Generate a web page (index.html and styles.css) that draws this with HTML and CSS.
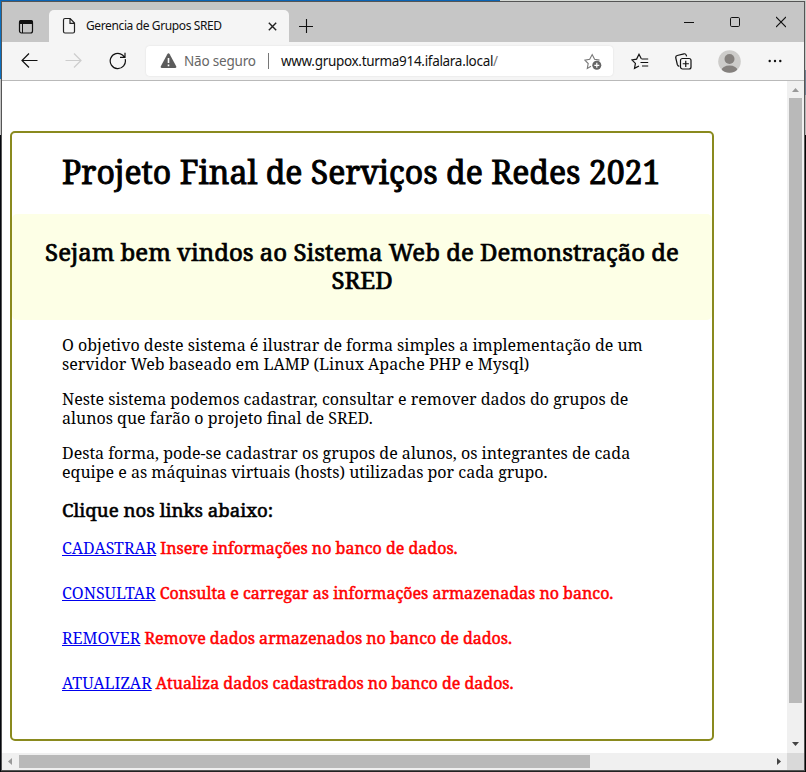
FILE: index.html
```html
<!DOCTYPE html>
<html lang="pt-BR">
<head>
<meta charset="utf-8">
<title>Gerencia de Grupos SRED</title>
<link rel="stylesheet" href="styles.css">
</head>
<body>
<div class="desktop">
<div class="window">
  <header class="tabs">
    <svg class="tab-menu" width="16" height="16" viewBox="0 0 16 16"><rect x="1.5" y="1.5" width="13" height="12.5" rx="2" fill="none" stroke="#111" stroke-width="1.2"/><path d="M1 5V3q0-2 2-2h10q2 0 2 2v2z" fill="#111"/><path d="M4.5 5v9" stroke="#111"/></svg>
    <div class="tab">
      <svg width="14" height="18" viewBox="0 0 14 18" fill="none" stroke="#222" stroke-width="1.2"><path d="M3 1.5h5.2L12.5 6v8.5q0 1.5-1.5 1.5H3q-1.500 0-1.500-1.500V3Q1.500 1.500 3 1.500zM8 1.500V6.300h4.500"/></svg>
      <span class="tab-title">Gerencia de Grupos SRED</span>
      <svg class="tab-close" width="9" height="9" viewBox="0 0 9 9"><path d="M.8.8l7.400 7.400M8.200.8L.8 8.200" stroke="#222" stroke-width="1.400"/></svg>
    </div>
    <svg class="tab-new" width="14" height="14" viewBox="0 0 14 14"><path d="M7.500 0v14M0 7.500h14" stroke="#111" stroke-width="1.100"/></svg>
    <div class="controls">
      <svg width="10" height="12" viewBox="0 0 10 12"><path d="M0 6.500h10" stroke="#111"/></svg>
      <svg width="10" height="12" viewBox="0 0 10 12"><rect x=".5" y="1.500" width="9" height="9" rx="1.200" fill="none" stroke="#111"/></svg>
      <svg width="10" height="12" viewBox="0 0 10 12"><path d="M0 1l10 10M10 1L0 11" stroke="#111" stroke-width="1.100"/></svg>
    </div>
  </header>
  <nav class="toolbar">
    <svg class="back" width="17" height="16" viewBox="0 0 17 16" fill="none" stroke="#111" stroke-width="1.200"><path d="M16.500 7.500H1M8 .5L1 7.500l7 7"/></svg>
    <svg class="forward" width="17" height="16" viewBox="0 0 17 16" fill="none" stroke="#cdcdcd" stroke-width="1.200"><path d="M.5 7.500H16M9 .5l7 7-7 7"/></svg>
    <svg class="reload" width="18" height="18" viewBox="0 0 18 18" fill="none" stroke="#111" stroke-width="1.200"><path d="M16.200 7.200A7.600 7.600 0 1 1 13.500 3L15.500 5M16 .8V5.400H11"/></svg>
    <div class="address">
      <svg width="17" height="16" viewBox="0 0 17 16"><path d="M7.300 1.200q1.200-1.700 2.400 0l6.500 12q.6 1.800-1.200 1.800H2q-1.800 0-1.200-1.800z" fill="#5b5b5b"/><path d="M8.500 5v5M8.500 11.500v1.700" stroke="#fff" stroke-width="1.600"/></svg>
      <span class="security">Não seguro</span>
      <span class="divider"></span>
      <span class="url">www.grupox.turma914.ifalara.local<i>/</i></span>
      <svg class="fav" width="18" height="17" viewBox="0 0 18 17"><path d="M7 13.300L3.300 15.500l.9-5L.8 7.100l4.900-.8L8.200 1.600l2.400 4.700 4.900.8" fill="none" stroke="#777" stroke-width="1.100"/><circle cx="12.800" cy="12.300" r="4.500" fill="#656565"/><path d="M12.800 9.800v5M10.300 12.300h5" stroke="#fff" stroke-width="1.200"/></svg>
    </div>
    <svg class="stars" width="18" height="17" viewBox="0 0 18 17" fill="none" stroke="#111" stroke-width="1.200"><path d="M10.300 5.800L8 1.300 5.600 6.100.9 6.900l3.500 3.500-.9 5L8 13M10.500 6h6.700M9.500 9.500h7.700M11 13h6.200"/></svg>
    <svg class="collections" width="17" height="17" viewBox="0 0 17 17" fill="none" stroke="#111" stroke-width="1.200"><rect x="5.500" y="5.500" width="10.500" height="10.500" rx="2"/><path d="M10.750 7.700v6.200M7.700 10.750h6.200M4.300 13.300Q2.800 13 2.300 11.500L.8 5q-.4-2 1.400-2.500L9 .8q1.800-.3 2.300 1.500l.3 1"/></svg>
    <svg class="avatar" width="23" height="23" viewBox="0 0 23 23"><clipPath id="face"><circle cx="11.500" cy="11.500" r="11.300"/></clipPath><g clip-path="url(#face)"><path d="M0 0h23v23H0z" fill="#cdccca"/><circle cx="11.500" cy="9" r="5" fill="#85817e"/><ellipse cx="11.500" cy="20.500" rx="8" ry="5" fill="#85817e"/></g></svg>
    <svg class="more" width="14" height="4" viewBox="0 0 14 4" fill="#111"><circle cx="1.700" cy="2" r="1.200"/><circle cx="7" cy="2" r="1.200"/><circle cx="12.300" cy="2" r="1.200"/></svg>
  </nav>
  <div class="viewport">
    <main class="page">
      <section class="card">
        <h1>Projeto Final de Serviços de Redes 2021</h1>
        <h2>Sejam bem vindos ao Sistema Web de Demonstração de<br>SRED</h2>
        <div class="text">
          <p>O objetivo deste sistema é ilustrar de forma simples a implementação de um<br>servidor Web baseado em LAMP (Linux Apache PHP e Mysql)</p>
          <p>Neste sistema podemos cadastrar, consultar e remover dados do grupos de<br>alunos que farão o projeto final de SRED.</p>
          <p>Desta forma, pode-se cadastrar os grupos de alunos, os integrantes de cada<br>equipe e as máquinas virtuais (hosts) utilizadas por cada grupo.</p>
          <h3>Clique nos links abaixo:</h3>
          <ul>
            <li><a href="#">CADASTRAR</a> <b>Insere informações no banco de dados.</b></li>
            <li><a href="#">CONSULTAR</a> <b>Consulta e carregar as informações armazenadas no banco.</b></li>
            <li><a href="#">REMOVER</a> <b>Remove dados armazenados no banco de dados.</b></li>
            <li><a href="#">ATUALIZAR</a> <b>Atualiza dados cadastrados no banco de dados.</b></li>
          </ul>
        </div>
      </section>
    </main>
    <div class="vbar">
      <svg width="7" height="4" viewBox="0 0 7 4"><path d="M0 4L3.500 0 7 4z" fill="#999"/></svg>
      <div class="vthumb"></div>
      <svg width="7" height="4" viewBox="0 0 7 4"><path d="M0 0h7L3.500 4z" fill="#444"/></svg>
    </div>
    <div class="hbar">
      <svg width="4" height="7" viewBox="0 0 4 7"><path d="M4 0v7L0 3.500z" fill="#999"/></svg>
      <div class="hthumb"></div>
      <svg width="4" height="7" viewBox="0 0 4 7"><path d="M0 0v7l4-3.500z" fill="#444"/></svg>
    </div>
    <div class="corner"></div>
  </div>
</div>
</div>
</body>
</html>
```
FILE: styles.css
```css
* { box-sizing: border-box; }
body { margin: 0; overflow: hidden; }
svg { display: block; flex: none; }
.desktop {
  width: 806px; height: 772px; padding: 1px;
  background:
    linear-gradient(90deg, #0a64b5 500px, #d5d9d5 500px) 0 0 / 806px 1px no-repeat,
    linear-gradient(#0c70c0 79px, #c4c4c4 79px 135px, #05070d 135px) 0 0 / 1px 772px no-repeat,
    linear-gradient(#c4c8c4 70px, #708090 70px 95px, #b5b5b5 95px 135px, #050505 135px) 805px 0 / 1px 772px no-repeat,
    #222;
}
.window { width: 804px; height: 770px; border: 1px solid #555; background: #fff; display: flex; flex-direction: column; }
.tabs { height: 40px; background: #c6c6c6; display: flex; align-items: center; font: 12px "Noto Sans", "Open Sans", sans-serif; }
.tab-menu { margin: 9px 0 0 16px; }
.tab { align-self: flex-end; margin-left: 15px; width: 240px; height: 32px; padding: 0 12px 0 13px; background: #f5f5f5; border-radius: 5px 5px 0 0; display: flex; align-items: center; color: #111; }
.tab-title { margin: -2px 0 0 10px; letter-spacing: -0.38px; white-space: nowrap; }
.tab-close { margin-left: auto; }
.tab-new { margin: 7px 0 0 10px; }
.controls { margin: -1px 18px 0 auto; display: flex; gap: 36px; }
.toolbar { height: 39px; background: #f5f5f5; border-bottom: 1px solid #b9b9b9; display: flex; align-items: center; }
.back { margin-left: 19px; }
.forward { margin-left: 27px; }
.reload { margin-left: 27px; }
.address { width: 467px; height: 30px; margin-left: 19px; padding: 0 11px 0 14px; border-radius: 4px; background: #fff; box-shadow: 0 0 2px #ddd; display: flex; align-items: center; font: 13.5px "Noto Sans", "Open Sans", sans-serif; white-space: nowrap; }
.security { margin-left: 7px; width: 72px; color: #666; letter-spacing: -0.2px; }
.divider { width: 1px; height: 16px; margin: 0 12px; background: #777; }
.url { color: #111; letter-spacing: -0.31px; }
.url i { font-style: normal; color: #777; }
.fav { margin-left: auto; }
.stars { margin-left: 18px; }
.collections { margin-left: 26px; }
.avatar { margin-left: 26px; }
.more { margin-left: 27px; }
.viewport { flex: 1; display: grid; grid-template: 672px 17px / 785px 17px; }
.page { padding: 50px 0 0 8px; font: 16px/19px "Noto Serif", serif; color: #000; }
.card { width: 704px; height: 610px; border: 2px solid #8a8a1e; border-radius: 5px; }
h1, h2, h3, p, ul { margin: 0; padding: 0; }
h1, h2, h3, b { font-weight: 400; white-space: nowrap; -webkit-text-stroke: 0.03em currentColor; }
h1 { height: 81px; padding-top: 20px; padding-left: 50px; font-size: 32px; line-height: 38px; }
h2 { height: 106px; padding-top: 24px; background: #fdffe6; border-radius: 5px; font-size: 24px; line-height: 28px; text-align: center; }
.text { padding: 16px 0 0 50px; }
p { margin-bottom: 16px; white-space: nowrap; }
h3 { padding-top: 1px; font-size: 18.72px; line-height: 22px; }
ul { margin-top: 18px; list-style: none; }
li { height: 45px; }
a { color: #00e; text-decoration: underline; }
b { color: #f00; }
.vbar { background: #f0f0f0; display: flex; flex-direction: column; align-items: center; justify-content: space-between; padding: 7px 0 7px; }
.vthumb { width: 13px; height: 605px; margin: 6px 0 auto; background: #b9b9b9; }
.hbar { background: #f0f0f0; display: flex; align-items: center; justify-content: space-between; padding: 0 6px; }
.hthumb { height: 13px; width: 571px; margin: 0 auto 0 7px; background: #b9b9b9; }
.corner { background: #d9d9d9; }
```
